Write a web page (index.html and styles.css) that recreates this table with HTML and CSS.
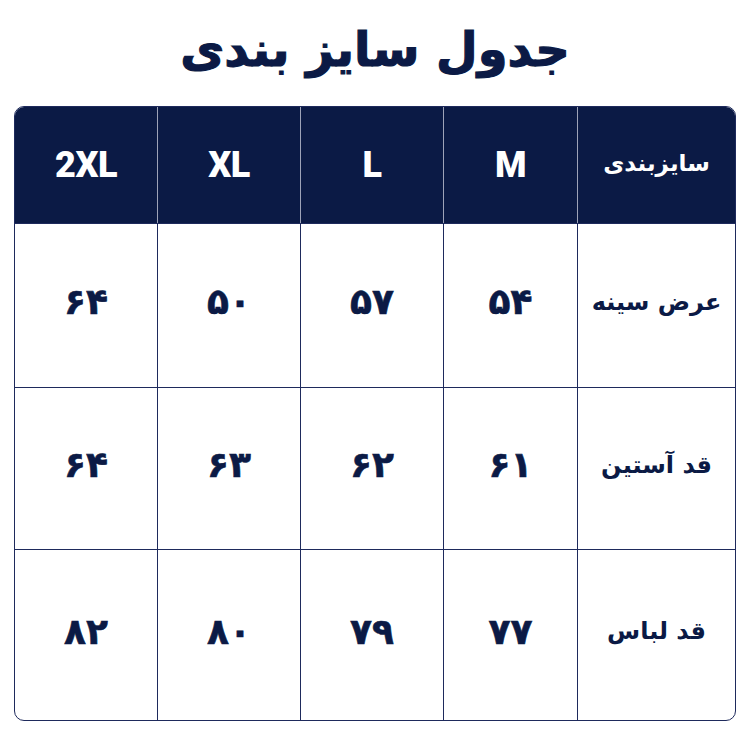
FILE: index.html
```html
<!DOCTYPE html>
<html lang="fa" dir="rtl">
<head>
<meta charset="utf-8">
<title>جدول سایز بندی</title>
<link rel="stylesheet" href="styles.css">
</head>
<body>
<div class="page">
  <h1 class="title">جدول سایز بندی</h1>
  <div class="table">
    <div class="cell head label">سایزبندی</div>
    <div class="cell head latin">M</div>
    <div class="cell head latin">L</div>
    <div class="cell head latin">XL</div>
    <div class="cell head latin last">2XL</div>

    <div class="cell label">عرض سینه</div>
    <div class="cell num">۵۴</div>
    <div class="cell num">۵۷</div>
    <div class="cell num">۵۰</div>
    <div class="cell num last">۶۴</div>

    <div class="cell label">قد آستین</div>
    <div class="cell num">۶۱</div>
    <div class="cell num">۶۲</div>
    <div class="cell num">۶۳</div>
    <div class="cell num last">۶۴</div>

    <div class="cell label">قد لباس</div>
    <div class="cell num">۷۷</div>
    <div class="cell num">۷۹</div>
    <div class="cell num">۸۰</div>
    <div class="cell num last">۸۲</div>
  </div>
</div>
</body>
</html>
```

FILE: styles.css
```css
html, body {
  margin: 0;
  padding: 0;
  background: #ffffff;
}
.page {
  width: 750px;
  height: 750px;
  box-sizing: border-box;
  padding: 0 14px 0 14px;
  display: flex;
  flex-direction: column;
  font-family: "DejaVu Sans", "Noto Sans", sans-serif;
  color: #0b1a45;
}
.title {
  margin: 0;
  height: 106px;
  display: flex;
  align-items: center;
  justify-content: center;
  padding-bottom: 8px;
  box-sizing: border-box;
  font-size: 48px;
  font-weight: bold;
  color: #0b1a45;
  -webkit-text-stroke: 1.2px #0b1a45;
}
.table {
  direction: rtl;
  display: grid;
  grid-template-columns: 158px 134px 143px 143px 1fr;
  grid-template-rows: 116px 164px 162px 1fr;
  width: 722px;
  height: 615px;
  box-sizing: border-box;
  border: 1.5px solid #1e2a5c;
  border-radius: 10px;
  overflow: hidden;
}
.cell {
  display: flex;
  align-items: center;
  justify-content: center;
  border-left: 1.5px solid #1e2a5c;
  border-top: 1.5px solid #1e2a5c;
  font-weight: bold;
  color: #0b1a45;
  padding-bottom: 8px;
  box-sizing: border-box;
}
.cell.last {
  border-left: none;
}
.head {
  background: #0b1a45;
  color: #ffffff;
  border-top: none;
  border-left-color: #9ea3b8;
  padding-bottom: 0;
}
.head.last {
  border-left: none;
}
.latin {
  font-family: "Roboto", "Liberation Sans", sans-serif;
  font-weight: 900;
  font-size: 36px;
  letter-spacing: -0.5px;
}
.head.label {
  font-size: 23px;
  padding-bottom: 4px;
}
.label {
  font-size: 24px;
}
.num {
  font-size: 36px;
  letter-spacing: 6px;
  -webkit-text-stroke: 0.6px #0b1a45;
}
```
